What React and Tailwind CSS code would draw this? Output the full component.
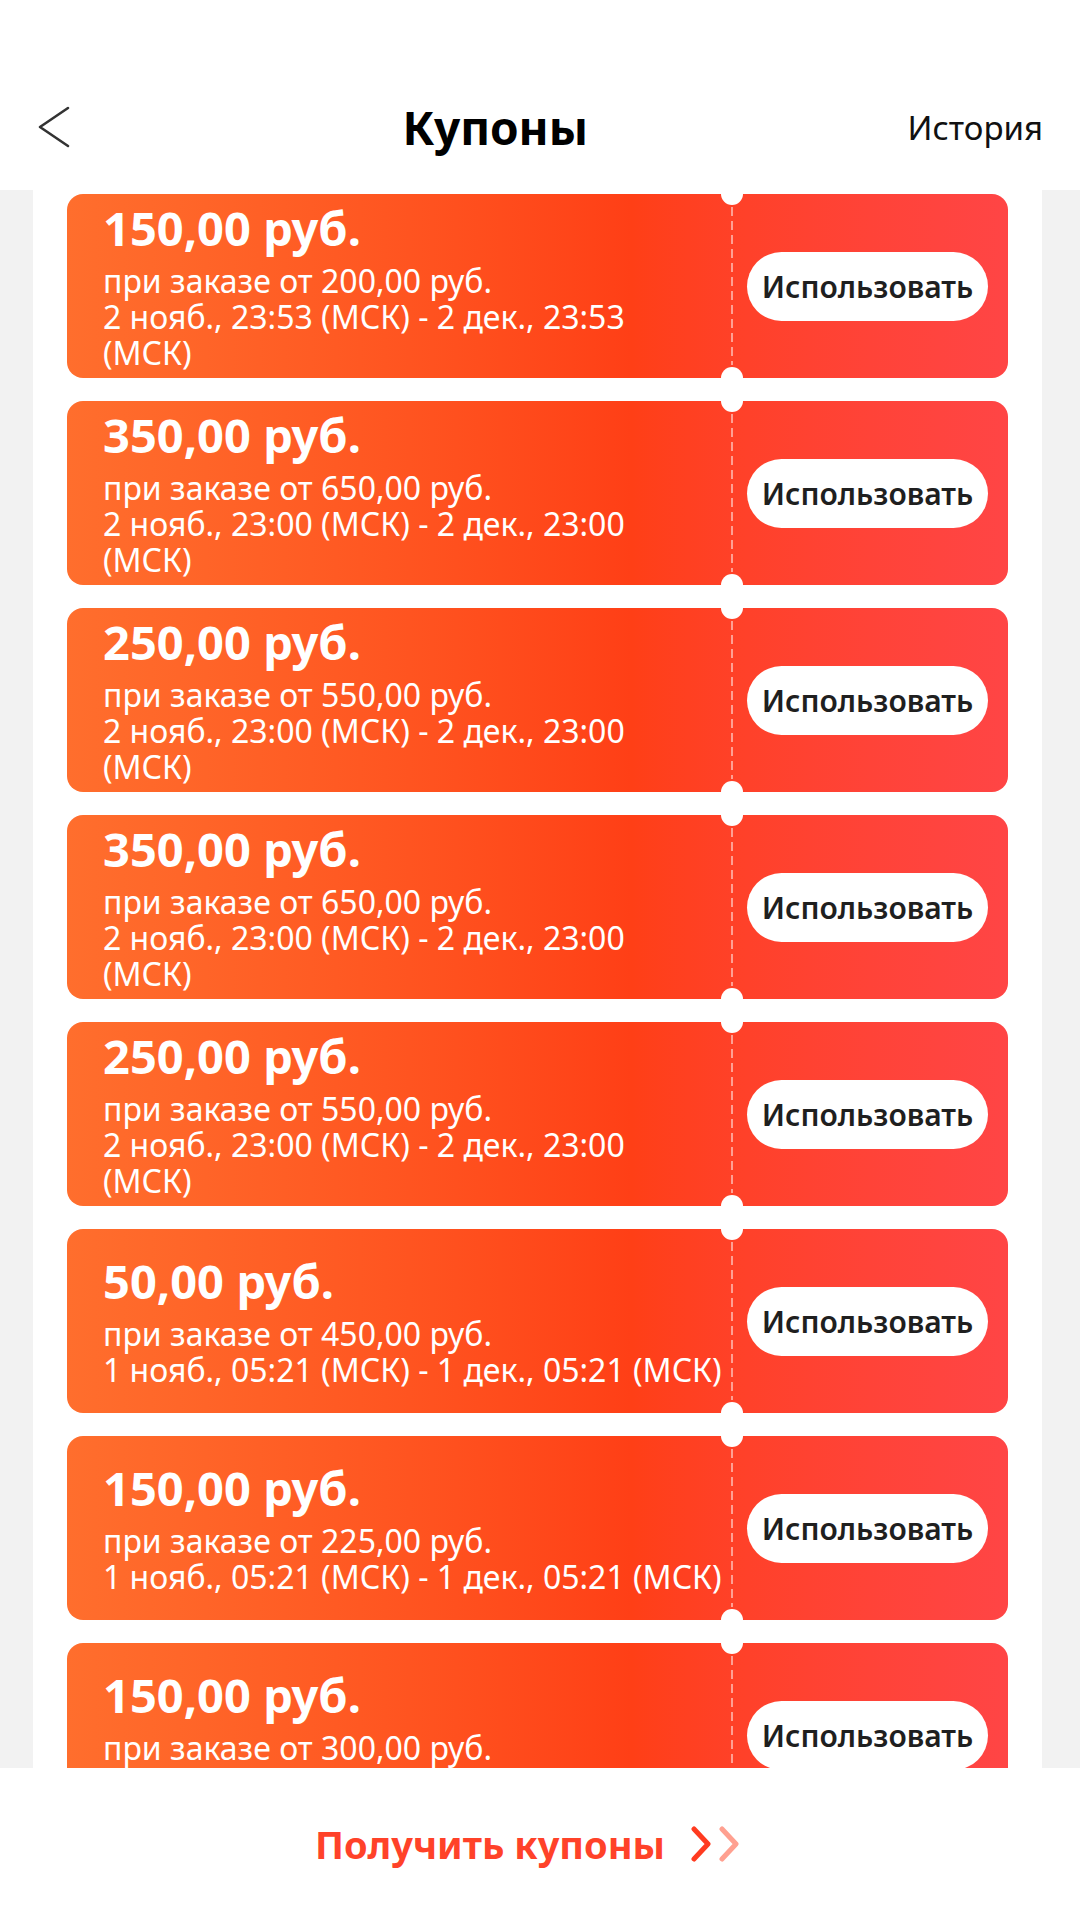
import React from 'react';

const coupons = [
  { amount: '150,00 руб.', min: '200,00', lines: ['2 нояб., 23:53 (МСК) - 2 дек., 23:53', '(МСК)'] },
  { amount: '350,00 руб.', min: '650,00', lines: ['2 нояб., 23:00 (МСК) - 2 дек., 23:00', '(МСК)'] },
  { amount: '250,00 руб.', min: '550,00', lines: ['2 нояб., 23:00 (МСК) - 2 дек., 23:00', '(МСК)'] },
  { amount: '350,00 руб.', min: '650,00', lines: ['2 нояб., 23:00 (МСК) - 2 дек., 23:00', '(МСК)'] },
  { amount: '250,00 руб.', min: '550,00', lines: ['2 нояб., 23:00 (МСК) - 2 дек., 23:00', '(МСК)'] },
  { amount: '50,00 руб.', min: '450,00', lines: ['1 нояб., 05:21 (МСК) - 1 дек., 05:21 (МСК)'] },
  { amount: '150,00 руб.', min: '225,00', lines: ['1 нояб., 05:21 (МСК) - 1 дек., 05:21 (МСК)'] },
  { amount: '150,00 руб.', min: '300,00', lines: ['1 нояб., 05:21 (МСК) - 1 дек., 05:21 (МСК)'] },
];

function BackIcon() {
  return (
    <svg width="34" height="42" viewBox="0 0 34 42" fill="none">
      <path d="M31 2 L3 21 L31 40" stroke="#333" strokeWidth="2.6" strokeLinecap="round" strokeLinejoin="round" />
    </svg>
  );
}

function Coupon({ c }) {
  return (
    <div className="relative flex h-[184px] shrink-0 rounded-[16px] bg-gradient-to-r from-[#ff6e2d] via-[#ff3f16] via-60% to-[#ff4545]">
      <div className="flex w-[664px] flex-col justify-center pl-[36px] text-white">
        <div className="text-[47px] font-bold leading-[54px] whitespace-nowrap">{c.amount}</div>
        <div className="mt-[8px] text-[32px] leading-[36px]">
          <div className="whitespace-nowrap">при заказе от {c.min} руб.</div>
          {c.lines.map((l, i) => (
            <div key={i} className="whitespace-nowrap">{l}</div>
          ))}
        </div>
      </div>
      <div className="relative w-[2px]">
        <div className="absolute -left-[10px] -top-[11px] h-[22px] w-[22px] rounded-full bg-white" />
        <div className="absolute -bottom-[11px] -left-[10px] h-[22px] w-[22px] rounded-full bg-white" />
        <svg className="absolute left-0 top-[13px]" width="2" height="158">
          <line x1="1" y1="0" x2="1" y2="158" stroke="rgba(255,255,255,0.5)" strokeWidth="2" strokeDasharray="9 5" />
        </svg>
      </div>
      <div className="flex flex-1 items-center pl-[14px]">
        <div className="flex h-[69px] w-[241px] items-center justify-center rounded-full bg-white text-[30px] font-semibold text-[#1f1f1f]">
          Использовать
        </div>
      </div>
    </div>
  );
}

export default function App() {
  return (
    <div className="flex h-[1920px] w-[1080px] flex-col overflow-hidden bg-white font-['Noto_Sans',sans-serif]">
      <header className="flex h-[190px] shrink-0 items-center px-[37px] pt-[64px]">
        <div className="flex w-[46px] items-center">
          <BackIcon />
        </div>
        <h1 className="flex-1 text-center text-[46px] font-bold leading-none text-black">Купоны</h1>
        <div className="text-[33px] leading-none text-[#111]">История</div>
      </header>

      <main className="flex-1 overflow-hidden bg-[#f2f2f2] pl-[33px] pr-[38px]">
        <div className="flex h-full flex-col gap-[23px] bg-white px-[34px] pt-[4px]">
          {coupons.map((c, i) => (
            <Coupon key={i} c={c} />
          ))}
        </div>
      </main>

      <footer className="flex h-[152px] shrink-0 items-center justify-center gap-[26px] pr-[24px]">
        <span className="text-[38px] font-bold leading-none text-[#ff4229]">Получить купоны</span>
        <svg width="50" height="36" viewBox="0 0 50 36" fill="none">
          <path d="M3 3 L17 18 L3 33" stroke="#ff3b20" strokeWidth="5" strokeLinecap="round" strokeLinejoin="round" />
          <path d="M31 3 L45 18 L31 33" stroke="#ffa090" strokeWidth="5" strokeLinecap="round" strokeLinejoin="round" />
        </svg>
      </footer>
    </div>
  );
}
